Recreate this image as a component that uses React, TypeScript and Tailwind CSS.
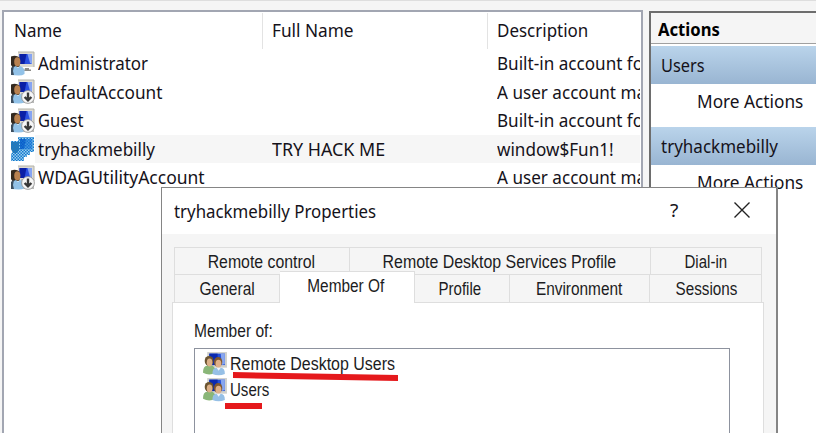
import React from "react";

const ui = "font-['Noto_Sans','Open_Sans',sans-serif] text-[17.5px] text-[#15121a]";
const dlg = "font-['Liberation_Sans',Arial,sans-serif] text-[17.5px] text-[#1c1c22]";

function Label({ children, className = "" }: { children: React.ReactNode; className?: string }) {
  return <span className={"inline-block origin-left whitespace-nowrap " + className}>{children}</span>;
}

function Screen() {
  return (
    <>
      <path d="M8 1h16v15H8z" fill="#dcdad2" />
      <path d="M8 1h16v15" stroke="#b3b2a9" fill="none" />
      <path d="M9.500 3h12.500v10H9.500z" fill="#2a50e0" />
      <path d="M9.500 3h7l-2 10h-5z" fill="#0a1fa6" />
      <path d="M17.500 3H22v10l-2-1z" fill="#86a4f2" />
    </>
  );
}

function UserIcon({ kind }: { kind: string }) {
  if (kind === "selected") {
    return (
      <svg width="25" height="25" viewBox="0 0 25 25">
        <defs>
          <pattern id="dither" width="3" height="3" patternUnits="userSpaceOnUse">
            <path d="M0 0h1.500v1.500H0zM1.500 1.500H3V3H1.500z" fill="#1279cf" />
          </pattern>
        </defs>
        <path d="M1 5h7V1h16v15h-4v3h-3v2h-3v4H1v-7l2-2-2-4z" fill="#9dcdec" />
        <path d="M10 3h12v10H10z" fill="#4a90e4" />
        <path d="M10 3h6l-2 10h-4z" fill="#1156cc" />
        <path d="M1 6h8v8l-2 3H3l-2-4z" fill="#347aa8" />
        <path d="M1 5h7V1h16v15h-4v3h-3v2h-3v4H1v-7l2-2-2-4z" fill="url(#dither)" />
      </svg>
    );
  }
  return (
    <svg width="25" height="25" viewBox="0 0 25 25">
      <Screen />
      {kind === "down" && <path d="M11 14h13v10H11z" fill="#b9bab9" />}
      {kind === "user" && <path d="M15 17h4v1.500h2v1.500h-7z" fill="#8c8c88" />}
      <path d="M1 5.500q5-2 8.500 1v9L3 17l-2-3z" fill="#33291f" />
      <ellipse cx="7.300" cy="10.800" rx="3.100" ry="4.600" fill="#b88150" />
      <path d="M1 24v-5q1-3 5-4l2 2 2-2q4 1 4.500 5v3q-2 1.500-6 1.500z" fill="#92c2e8" />
      <path d="M1 24v-7q1-1.500 3-2l-1 5 1 4z" fill="#3d4f60" />
      {kind === "down" && (
        <>
          <circle cx="18" cy="18" r="6.400" fill="#f6f6f6" stroke="#8d8d8d" strokeWidth=".8" />
          <path d="M18 13.500v7.500M14.600 18l3.400 3.400 3.400-3.400" fill="none" stroke="#383838" strokeWidth="2.400" />
        </>
      )}
    </svg>
  );
}

function GroupIcon() {
  return (
    <svg className="-ml-px shrink-0" width="26" height="25" viewBox="0 0 25 24">
      <path d="M5 1h19v15H5z" fill="#cfd0cc" />
      <path d="M7 2.500h15v11H7z" fill="#2450d8" />
      <path d="M7 2.500h8v11H7z" fill="#0b2ab0" />
      <path d="M18 2.500h4v10l-3 1z" fill="#88a6ee" />
      <path d="M1 20q0-5 4-6h5l3 3v4q-6 3-12 0z" fill="#8ab678" />
      <ellipse cx="6.800" cy="9.500" rx="4.200" ry="4.800" fill="#6b5430" />
      <ellipse cx="7.300" cy="11" rx="2.700" ry="3.800" fill="#dbb088" />
      <path d="M10 22q0-6 4-6h4q4 0 4 6-6 2.500-12 0z" fill="#96c0e6" />
      <ellipse cx="15.500" cy="10.500" rx="4" ry="4.800" fill="#80582f" />
      <ellipse cx="15.800" cy="12.200" rx="2.800" ry="3.800" fill="#dfb088" />
      <path d="M14 16l2 3 2-3z" fill="#f1f5fa" />
    </svg>
  );
}

const rows = [
  { icon: "user", name: "Administrator", fit: "scale-x-[.968]", full: "", desc: "Built-in account fo" },
  { icon: "down", name: "DefaultAccount", fit: "scale-x-[.982]", full: "", desc: "A user account ma" },
  { icon: "down", name: "Guest", fit: "scale-x-[.945]", full: "", desc: "Built-in account fo" },
  { icon: "selected", name: "tryhackmebilly", fit: "scale-x-[.972]", full: "TRY HACK ME", desc: "window$Fun1!" },
  { icon: "down", name: "WDAGUtilityAccount", fit: "scale-x-[1]", full: "", desc: "A user account ma" },
];

function UserList() {
  return (
    <div className="w-[641px] h-[440px] shrink-0 border-2 border-[#a2a6b2] bg-white pr-[1px]">
      <div className="flex h-[37px] leading-[35px]">
        <div className="mt-[1px] w-[259px] h-[36px] border-r border-[#e3e3e3] pl-[10px]"><Label className="scale-x-[.97]">Name</Label></div>
        <div className="mt-[1px] w-[225px] h-[36px] border-r border-[#e3e3e3] pl-[9px]"><Label className="scale-x-[.985]">Full Name</Label></div>
        <div className="mt-[1px] pl-[9px]"><Label className="scale-x-[.97]">Description</Label></div>
      </div>
      <div>
        {rows.map((r) => (
          <div key={r.name} className="flex h-[28.5px] items-center overflow-hidden pl-[6px] leading-[29px]">
            <div className="w-[25px] h-[25px] shrink-0"><UserIcon kind={r.icon} /></div>
            <div className={"flex h-full flex-1 overflow-hidden " + (r.icon === "selected" ? "bg-[#f6f6f6]" : "")}>
              <div className="w-[237px] shrink-0 pl-[3px]"><Label className={r.fit}>{r.name}</Label></div>
              <div className="w-[225px] shrink-0"><Label className="scale-x-[1.02]">{r.full}</Label></div>
              <Label className="scale-x-[.978]">{r.desc}</Label>
            </div>
          </div>
        ))}
      </div>
    </div>
  );
}

function ActionGroup({ title, fit }: { title: string; fit: string }) {
  return (
    <div className="h-[81px]">
      <div className="h-[38px] bg-linear-to-b from-[#bad4eb] to-[#99b5d2] pl-[10px] leading-[38px]"><Label className={fit}>{title}</Label></div>
      <div className="pl-[46px] leading-[35px]"><Label className="scale-x-[.985]">More Actions</Label></div>
    </div>
  );
}

function Actions() {
  return (
    <div className="ml-[6px] mt-[1px] h-[440px] flex-1 border-l-2 border-t-2 border-[#6d6d6d] bg-white">
      <div className="h-[31px] border-b border-[#a0a0a0] bg-[#f5f5f5] pl-[7px] leading-[32px] font-bold text-black"><Label className="scale-x-[.95]">Actions</Label></div>
      <div className="pt-[2px]">
        <ActionGroup title="Users" fit="scale-x-[.935]" />
        <ActionGroup title="tryhackmebilly" fit="scale-x-[.972]" />
      </div>
    </div>
  );
}

function Tab({ children, className, fit }: { children: string; className: string; fit: string }) {
  return (
    <div className={"flex shrink-0 justify-center border-r border-t border-[#dedede] pt-[1px] leading-[27px] " + className}>
      <span className={"inline-block whitespace-nowrap " + fit}>{children}</span>
    </div>
  );
}

function PropertiesDialog() {
  return (
    <div className="absolute left-[161px] top-[187px] h-[260px] w-[617px] border-[1.5px] border-r-2 border-[#858585] bg-[#f5f5f5]">
      <div className={"flex h-[46px] bg-white pl-[12px] leading-[46px] " + ui}>
        <div className="w-[496px]"><Label className="scale-x-[.963]">tryhackmebilly Properties</Label></div>
        <div className="w-[64px]"><Label className="-translate-y-px scale-x-[1.1] scale-y-[1.05]">?</Label></div>
        <svg className="mt-[14px]" width="16" height="16" viewBox="0 0 16 16"><path d="M.5.5l15 15M15.500.5l-15 15" stroke="#222" strokeWidth="1.400" /></svg>
      </div>
      <div className={"pl-[10px] pt-[13px] " + dlg}>
        <div className="ml-[2px] flex h-[27px] w-[588px] border-l border-[#dedede]">
          <Tab className="w-[175px]" fit="-translate-x-px scale-x-[.905]">Remote control</Tab>
          <Tab className="w-[301px]" fit="-translate-x-px scale-x-[.91]">Remote Desktop Services Profile</Tab>
          <Tab className="w-[111px]" fit="scale-x-[.86]">Dial-in</Tab>
        </div>
        <div className="ml-[2px] flex h-[28px] w-[588px] border-l border-[#dedede]">
          <Tab className="w-[105px]" fit="scale-x-[.89]">General</Tab>
          <div className="relative z-10 -mt-[3px] h-[32px] w-[135px] shrink-0 border-r border-t border-[#dedede] bg-white text-center leading-[29px]">
            <span className="inline-block -translate-x-px scale-x-[.88]">Member Of</span>
          </div>
          <Tab className="w-[95px]" fit="-translate-x-[2px] scale-x-[.86]">Profile</Tab>
          <Tab className="w-[140px]" fit="scale-x-[.88]">Environment</Tab>
          <Tab className="w-[112px]" fit="translate-x-px scale-x-[.87]">Sessions</Tab>
        </div>
        <div className="h-[160px] w-[592px] border border-[#dedede] bg-white pl-[21px] pt-[17px]">
          <div className="h-[28px] leading-[23px]"><Label className="scale-x-[.89]">Member of:</Label></div>
          <div className="relative h-[130px] w-[536px] border-[1.5px] border-[#8d929e] pl-[8px] pt-[2px]">
            <div className="flex h-[25.5px] items-center"><GroupIcon /><Label className="ml-[2px] scale-x-[.912]">Remote Desktop Users</Label></div>
            <div className="flex h-[25.5px] items-center"><GroupIcon /><Label className="ml-[2px] translate-y-px scale-x-[.86]">Users</Label></div>
            <svg className="absolute left-[30px] top-[23px]" width="180" height="40" viewBox="225 372 180 40">
              <path d="M233 372l165 3v6l-165-3zM225 403h37v6h-37z" fill="#e5191c" />
            </svg>
          </div>
        </div>
      </div>
    </div>
  );
}

export default function App() {
  return (
    <div className="relative h-[433px] w-[816px] overflow-hidden bg-[#f5f5f5]">
      <div className={ui}>
        <div className="h-[10px] border-t border-[#dedede]" />
        <div className="flex pl-[2px]">
          <UserList />
          <Actions />
        </div>
      </div>
      <PropertiesDialog />
    </div>
  );
}
